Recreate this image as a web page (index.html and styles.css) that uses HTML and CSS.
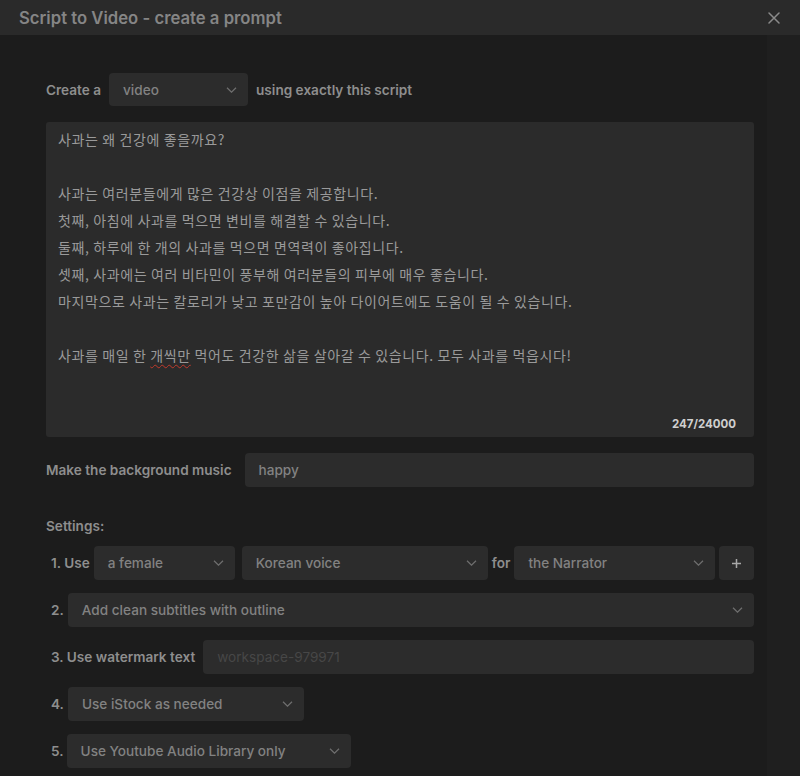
FILE: index.html
```html
<!DOCTYPE html>
<html lang="en">
<head>
<meta charset="utf-8">
<title>Script to Video - create a prompt</title>
<link rel="stylesheet" href="styles.css">
</head>
<body>
<div class="dialog">
  <header class="dlg-head">
    <h1 class="dlg-title">Script to Video - create a prompt</h1>
    <button class="close" aria-label="Close">
      <svg width="12" height="12" viewBox="0 0 12 12"><path d="M1 1L11 11M11 1L1 11" stroke="#8a8a8a" stroke-width="1.5" stroke-linecap="round"/></svg>
    </button>
  </header>
  <main class="dlg-body">
    <div class="row create-row">
      <span class="label">Create a</span>
      <div class="select w-video"><span>video</span><svg class="chev" width="11" height="6" viewBox="0 0 11 6"><path d="M1 0.8l4.5 4.4 4.5-4.4" fill="none" stroke="#6f6f6f" stroke-width="1.2"/></svg></div>
      <span class="label">using exactly this script</span>
    </div>

    <div class="script">
      <p>사과는 왜 건강에 좋을까요?</p>
      <p>&nbsp;</p>
      <p>사과는 여러분들에게 많은 건강상 이점을 제공합니다.</p>
      <p>첫째, 아침에 사과를 먹으면 변비를 해결할 수 있습니다.</p>
      <p>둘째, 하루에 한 개의 사과를 먹으면 면역력이 좋아집니다.</p>
      <p>셋째, 사과에는 여러 비타민이 풍부해 여러분들의 피부에 매우 좋습니다.</p>
      <p>마지막으로 사과는 칼로리가 낮고 포만감이 높아 다이어트에도 도움이 될 수 있습니다.</p>
      <p>&nbsp;</p>
      <p>사과를 매일 한 <span class="spell">개씩만</span> 먹어도 건강한 삶을 살아갈 수 있습니다. 모두 사과를 먹읍시다!</p>
      <span class="counter">247/24000</span>
    </div>

    <div class="row music-row">
      <span class="label">Make the background music</span>
      <div class="input grow"><span>happy</span></div>
    </div>

    <div class="settings-label label">Settings:</div>

    <div class="row set-row r1">
      <span class="label num">1. Use</span>
      <div class="select w-female"><span>a female</span><svg class="chev" width="11" height="6" viewBox="0 0 11 6"><path d="M1 0.8l4.5 4.4 4.5-4.4" fill="none" stroke="#6f6f6f" stroke-width="1.2"/></svg></div>
      <div class="select w-voice"><span>Korean voice</span><svg class="chev" width="11" height="6" viewBox="0 0 11 6"><path d="M1 0.8l4.5 4.4 4.5-4.4" fill="none" stroke="#6f6f6f" stroke-width="1.2"/></svg></div>
      <span class="label for">for</span>
      <div class="select grow"><span>the Narrator</span><svg class="chev" width="11" height="6" viewBox="0 0 11 6"><path d="M1 0.8l4.5 4.4 4.5-4.4" fill="none" stroke="#6f6f6f" stroke-width="1.2"/></svg></div>
      <button class="plus" aria-label="Add"><svg width="11" height="11" viewBox="0 0 11 11"><path d="M5.5 1v9M1 5.5h9" stroke="#a8a8a8" stroke-width="1.5"/></svg></button>
    </div>

    <div class="row set-row">
      <span class="label num">2.</span>
      <div class="select grow"><span>Add clean subtitles with outline</span><svg class="chev" width="11" height="6" viewBox="0 0 11 6"><path d="M1 0.8l4.5 4.4 4.5-4.4" fill="none" stroke="#6f6f6f" stroke-width="1.2"/></svg></div>
    </div>

    <div class="row set-row r3">
      <span class="label num">3. Use watermark text</span>
      <div class="input grow"><span class="ph">workspace-979971</span></div>
    </div>

    <div class="row set-row">
      <span class="label num">4.</span>
      <div class="select w-istock"><span>Use iStock as needed</span><svg class="chev" width="11" height="6" viewBox="0 0 11 6"><path d="M1 0.8l4.5 4.4 4.5-4.4" fill="none" stroke="#6f6f6f" stroke-width="1.2"/></svg></div>
    </div>

    <div class="row set-row r5">
      <span class="label num">5.</span>
      <div class="select w-yt"><span>Use Youtube Audio Library only</span><svg class="chev" width="11" height="6" viewBox="0 0 11 6"><path d="M1 0.8l4.5 4.4 4.5-4.4" fill="none" stroke="#6f6f6f" stroke-width="1.2"/></svg></div>
    </div>
  </main>
</div>
</body>
</html>
```
FILE: styles.css
```css
* { box-sizing: border-box; }
html, body {
  margin: 0;
  padding: 0;
  background: #1c1c1c;
  height: 100%;
  overflow: hidden;
}
body {
  font-family: Inter, "Noto Sans CJK KR", sans-serif;
  color: #8f8f8f;
}
.dialog {
  width: 800px;
  height: 776px;
  background: linear-gradient(to right, #1c1c1c 0, #1c1c1c 767px, #1f1f1f 767px);
}
.dlg-head {
  height: 35px;
  background: #2a2a2a;
  display: flex;
  align-items: center;
  justify-content: space-between;
  padding: 0 19px 0 19px;
}
.dlg-title {
  margin: 0;
  font-size: 16.7px;
  font-weight: 600;
  color: #858585;
}
.close {
  background: none;
  border: 0;
  padding: 0;
  width: 12px;
  height: 12px;
  display: flex;
  margin-right: 1px;
}
.dlg-body {
  padding: 38px 46px 0 46px;
  width: 800px;
}
.dlg-body > * { width: 708px; }
.row {
  display: flex;
  align-items: center;
  gap: 4px;
}
.label {
  font-size: 13.6px;
  font-weight: 600;
  color: #8e8e8e;
  white-space: nowrap;
}
.select, .input {
  height: 34px;
  background: #2c2c2c;
  border-radius: 4px;
  display: flex;
  align-items: center;
  justify-content: space-between;
  padding: 0 11px 0 14px;
  font-size: 13.6px;
  font-weight: 500;
  color: #828282;
}
.chev { flex: none; }
.grow { flex: 1; }
.create-row { gap: 8px; }
.create-row .select { height: 33px; }
.w-video { width: 139px; }
.script {
  margin-top: 16px;
  height: 315px;
  background: #2b2b2b;
  border-radius: 3px;
  padding: 4px 12px 0 12px;
  position: relative;
  font-family: "Noto Sans CJK KR", Inter, sans-serif;
  font-size: 14px;
  letter-spacing: 0.62px;
  color: #9a9a9a;
}
.script p {
  margin: 0;
  line-height: 27px;
  height: 27px;
  white-space: nowrap;
}
.spell {
  text-decoration: underline wavy #c0392b;
  text-decoration-thickness: 1px;
  text-underline-offset: 3px;
}
.counter {
  position: absolute;
  right: 18px;
  bottom: 6px;
  font-family: Inter, sans-serif;
  font-size: 11.5px;
  letter-spacing: 0;
  font-weight: 700;
  color: #cfcfcf;
}
.music-row {
  margin-top: 16px;
  gap: 13px;
}
.settings-label {
  margin-top: 31px;
  line-height: 16px;
  margin-bottom: 12px;
}
.set-row {
  padding-left: 5px;
  margin-bottom: 13px;
}
.r3 { gap: 8px; }
.r5 { gap: 3px; }
.w-female { width: 141px; }
.w-voice { width: 246px; margin-left: 3px; }
.plus {
  width: 35px;
  height: 34px;
  background: #2c2c2c;
  border: 0;
  border-radius: 4px;
  display: flex;
  align-items: center;
  justify-content: center;
  padding: 0;
}
.w-istock { width: 236px; }
.w-yt { width: 284px; }
.ph { color: #474747; font-weight: 400; }
```
